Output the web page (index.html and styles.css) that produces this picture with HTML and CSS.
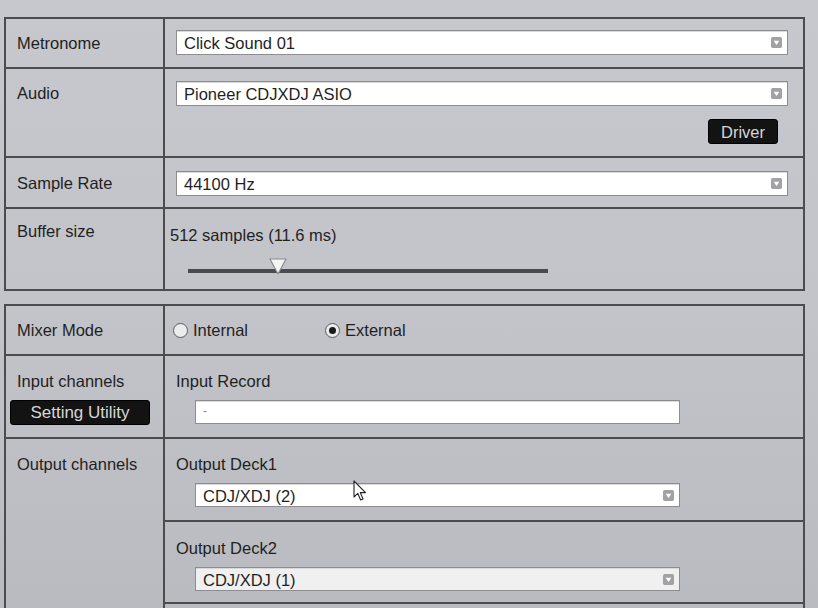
FILE: index.html
```html
<!DOCTYPE html>
<html>
<head>
<meta charset="utf-8">
<link rel="stylesheet" href="styles.css">
</head>
<body>
<div class="page">
  <div class="panel">
    <div class="row">
      <div class="label">Metronome</div>
      <div class="value v-top">
        <div class="select"><span>Click Sound 01</span><svg class="arrow" viewBox="0 0 10 10"><rect width="10" height="10" rx="1.5" fill="#a2a2a4"/><polygon points="2.4,3.3 7.6,3.3 5,7.2" fill="#fff"/></svg></div>
      </div>
    </div>
    <div class="row">
      <div class="label">Audio</div>
      <div class="value v-audio">
        <div class="select"><span>Pioneer CDJXDJ ASIO</span><svg class="arrow" viewBox="0 0 10 10"><rect width="10" height="10" rx="1.5" fill="#a2a2a4"/><polygon points="2.4,3.3 7.6,3.3 5,7.2" fill="#fff"/></svg></div>
        <div class="btn-row"><button class="btn driver">Driver</button></div>
      </div>
    </div>
    <div class="row">
      <div class="label l-rate">Sample Rate</div>
      <div class="value v-rate">
        <div class="select"><span>44100 Hz</span><svg class="arrow" viewBox="0 0 10 10"><rect width="10" height="10" rx="1.5" fill="#a2a2a4"/><polygon points="2.4,3.3 7.6,3.3 5,7.2" fill="#fff"/></svg></div>
      </div>
    </div>
    <div class="row">
      <div class="label l-buffer">Buffer size</div>
      <div class="value v-buffer">
        <div class="buf-text">512 samples (11.6 ms)</div>
        <div class="slider">
          <div class="track"></div>
          <svg class="thumb" viewBox="0 0 18 18"><polygon points="1,1 17,1 9,16" fill="#f4f4f4" stroke="#8a8a8a" stroke-width="1.2" stroke-linejoin="round"/></svg>
        </div>
      </div>
    </div>
  </div>

  <div class="panel panel2">
    <div class="row">
      <div class="label">Mixer Mode</div>
      <div class="value v-mode">
        <label class="radio"><span class="circle"></span>Internal</label>
        <label class="radio radio-ext"><span class="circle checked"></span>External</label>
      </div>
    </div>
    <div class="row">
      <div class="label l-input">
        <div>Input channels</div>
        <button class="btn setting">Setting Utility</button>
      </div>
      <div class="value v-sub">
        <div class="sub-title">Input Record</div>
        <div class="field"><span>-</span></div>
      </div>
    </div>
    <div class="row">
      <div class="label l-input">Output channels</div>
      <div class="value v-outs">
        <div class="sub v-sub">
          <div class="sub-title">Output Deck1</div>
          <div class="select field-sel"><span>CDJ/XDJ (2)</span><svg class="arrow" viewBox="0 0 10 10"><rect width="10" height="10" rx="1.5" fill="#a2a2a4"/><polygon points="2.4,3.3 7.6,3.3 5,7.2" fill="#fff"/></svg></div>
        </div>
        <div class="sub v-sub sub2">
          <div class="sub-title">Output Deck2</div>
          <div class="select field-sel dim"><span>CDJ/XDJ (1)</span><svg class="arrow" viewBox="0 0 10 10"><rect width="10" height="10" rx="1.5" fill="#a2a2a4"/><polygon points="2.4,3.3 7.6,3.3 5,7.2" fill="#fff"/></svg></div>
        </div>
        <div class="sub sub3"></div>
      </div>
    </div>
  </div>
</div>
<svg class="cursor" viewBox="0 0 14 22"><path d="M1 1 L1 17 L4.8 13.4 L7.6 20 L10 19 L7.3 12.6 L12.5 12.6 Z" fill="#fff" stroke="#222" stroke-width="1.1" stroke-linejoin="round"/></svg>
</body>
</html>
```

FILE: styles.css
```css
html, body {
  margin: 0;
  padding: 0;
}
body {
  width: 818px;
  height: 608px;
  overflow: hidden;
  position: relative;
  background: linear-gradient(180deg, #c7c8cd 0%, #c3c4c9 50%, #babbc0 100%);
  font-family: "Liberation Sans", Arial, Helvetica, sans-serif;
  font-size: 16.5px;
  color: #1f1f1f;
}
.page {
  padding-top: 17px;
  height: 591px;
  overflow: hidden;
}
.panel {
  margin: 0 13px 0 4px;
  border: 2px solid #4c4c4f;
}
.panel2 {
  margin-top: 13px;
}
.row {
  display: grid;
  grid-template-columns: 159px 1fr;
  border-top: 2px solid #4c4c4f;
}
.row:first-child {
  border-top: none;
}
.label {
  box-sizing: border-box;
  border-right: 2px solid #4c4c4f;
  padding: 14px 0 0 11px;
  line-height: 20px;
  white-space: nowrap;
}
.l-rate { padding-top: 15px; }
.l-buffer { padding-top: 12px; }
.l-input { padding-top: 15px; }

.value {
  padding: 0 15px 0 11px;
}
.v-top { height: 48px; padding-top: 11px; box-sizing: border-box; }
.v-audio { height: 87px; padding-top: 12px; box-sizing: border-box; }
.v-rate { height: 49px; padding-top: 13px; box-sizing: border-box; }
.v-buffer { height: 80px; padding: 16px 0 0 5px; box-sizing: border-box; }
.v-mode {
  height: 48px;
  padding: 14px 0 0 8px;
  box-sizing: border-box;
  display: flex;
  align-items: flex-start;
}
.v-sub {
  height: 81px;
  box-sizing: border-box;
  padding: 15px 0 0 11px;
}
.v-outs {
  padding: 0;
}
.sub + .sub {
  border-top: 2px solid #4c4c4f;
}
.sub2 { height: 82px; padding-top: 16px; }
.sub3 { height: 20px; }

.select {
  box-sizing: border-box;
  height: 25px;
  background: #fff;
  border: 1px solid #8d8d90;
  box-shadow: inset 0 1px 0 #d9d9d9;
  display: flex;
  align-items: center;
  justify-content: space-between;
  padding: 0 5px 0 7px;
  line-height: 20px;
}
.select span {
  padding-top: 1px;
}
.arrow {
  width: 11px;
  height: 11px;
  display: block;
}
.btn-row {
  display: flex;
  justify-content: flex-end;
  padding-right: 10px;
  margin-top: 13px;
}
.btn {
  font-family: "Liberation Sans", Arial, Helvetica, sans-serif;
  font-size: 16.5px;
  color: #d6d6d6;
  background: #131313;
  border: 1px solid #000;
  border-radius: 3px;
  padding: 0;
  line-height: 22px;
  height: 25px;
}
.driver {
  width: 70px;
}
.setting {
  display: block;
  width: 140px;
  margin: 9px 0 0 -7px;
  font-size: 17px;
}
.buf-text {
  line-height: 20px;
}
.slider {
  position: relative;
  height: 30px;
  margin: 4px 0 0 18px;
  width: 360px;
}
.track {
  position: absolute;
  left: 0;
  top: 20px;
  width: 360px;
  height: 4px;
  background: #4a4a4d;
}
.thumb {
  position: absolute;
  left: 81px;
  top: 9px;
  width: 18px;
  height: 18px;
}
.radio {
  display: flex;
  align-items: center;
  line-height: 20px;
}
.radio-ext {
  margin-left: 77px;
}
.circle {
  box-sizing: border-box;
  width: 15px;
  height: 15px;
  border-radius: 50%;
  border: 1.3px solid #5a5a5c;
  background: #ececec;
  margin-right: 5px;
  display: flex;
  align-items: center;
  justify-content: center;
}
.circle.checked::after {
  content: "";
  width: 7px;
  height: 7px;
  border-radius: 50%;
  background: #1a1a1a;
}
.sub-title {
  line-height: 20px;
}
.field {
  box-sizing: border-box;
  margin: 9px 0 0 19px;
  width: 485px;
  height: 24px;
  background: #fff;
  border: 1px solid #8d8d90;
  box-shadow: inset 0 1px 0 #d9d9d9;
  font-size: 12px;
  color: #8a8a8a;
  padding: 3px 0 0 7px;
}
.field-sel {
  margin: 9px 0 0 19px;
  width: 485px;
  height: 24px;
}
.dim {
  background: #f0f0f0;
}
.cursor {
  position: absolute;
  left: 353px;
  top: 480px;
  width: 14px;
  height: 22px;
}
```
